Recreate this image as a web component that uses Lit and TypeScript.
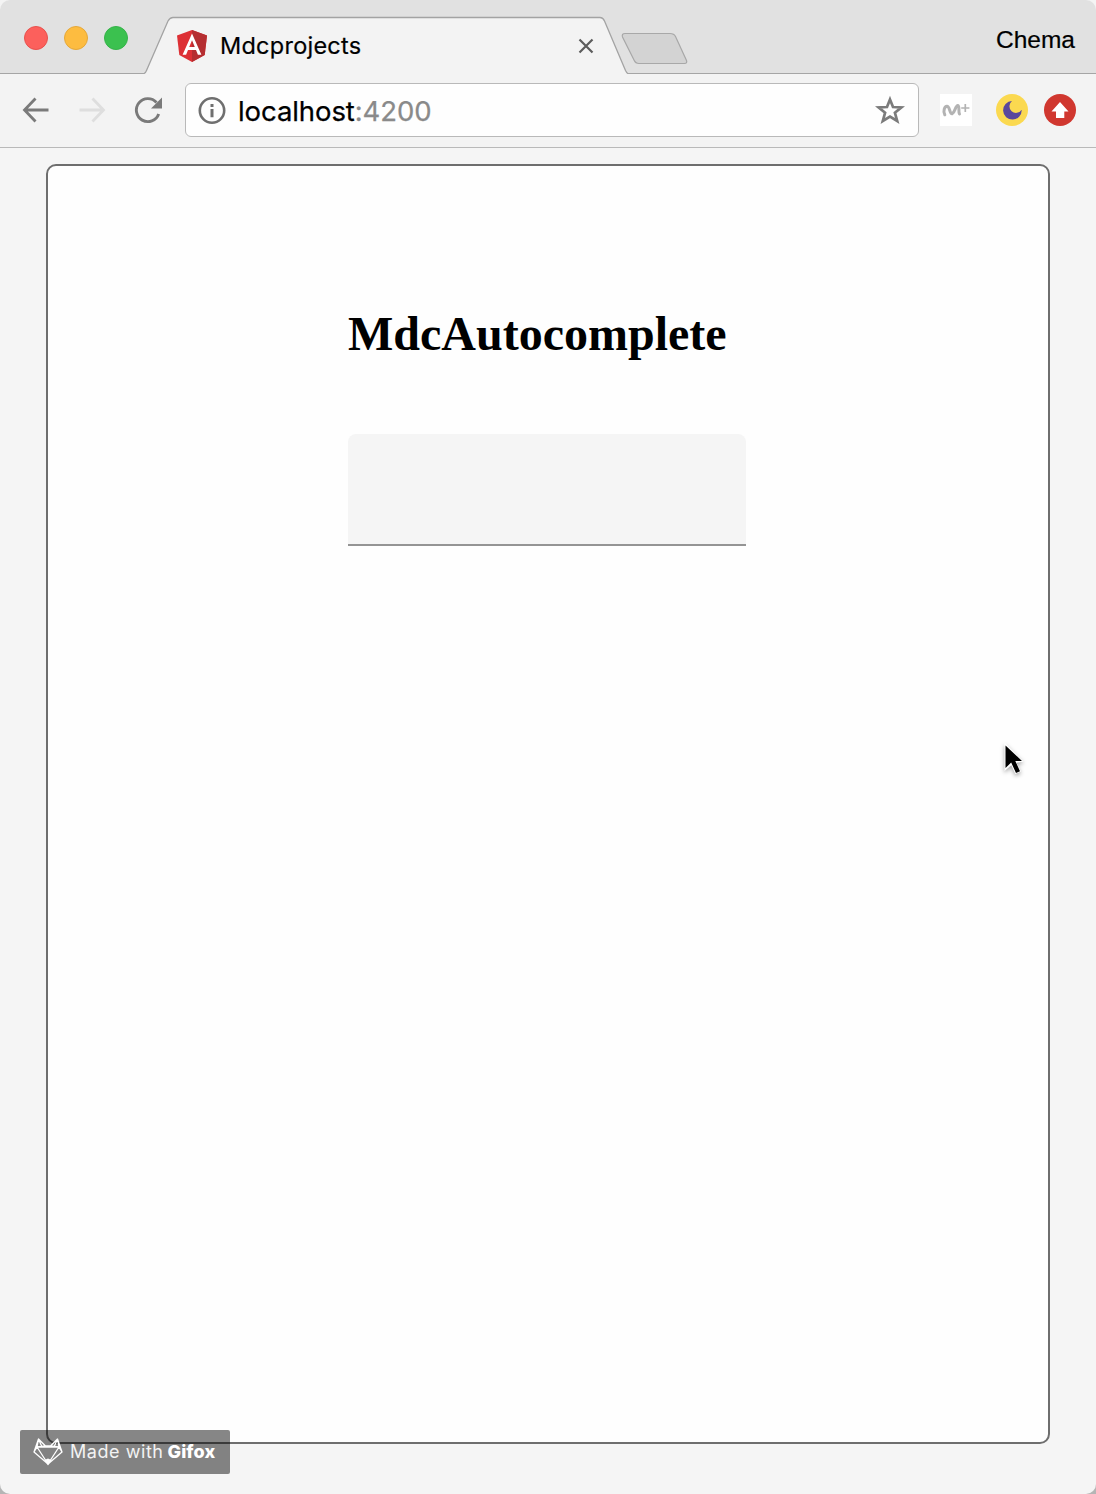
import { LitElement, html, css } from "lit";
import { customElement } from "lit/decorators.js";

@customElement("browser-tabs")
class BrowserTabs extends LitElement {
  static styles = css`
    :host { display: block; }
    .strip { height: 74px; display: flex; position: relative; box-sizing: border-box; background: #e1e1e1; border-bottom: 1px solid #a5a5a5; }
    .lights { display: flex; gap: 16px; padding: 26px 16px 0 24px; width: 144px; box-sizing: border-box; }
    .light { width: 24px; height: 24px; border-radius: 50%; box-sizing: border-box; flex: none; }
    .close { background: #fc605c; border: 1px solid #e8514d; }
    .min { background: #fdbc40; border: 1px solid #e5a83a; }
    .max { background: #3bc14f; border: 1px solid #35b349; }
    .tab { width: 484px; height: 74px; position: relative; flex: none; }
    .shape { position: absolute; left: 0; top: 0; }
    .content { position: relative; display: flex; align-items: center; height: 56px; padding: 18px 34px 0 32px; box-sizing: content-box; }
    .content { height: 56px; }
    .title { font: 23.5px/30px Inter, sans-serif; margin-left: 12px; flex: 1; color: #000; white-space: nowrap; letter-spacing: 0.25px; -webkit-text-stroke: 0.2px #000; }
    .new { margin: 32px 0 0 -7px; flex: none; align-self: flex-start; position: relative; }
    .user { font: 24.5px/30px "Liberation Sans", sans-serif; margin: 25px 21px 0 auto; color: #000; -webkit-text-stroke: 0.2px #000; }
  `;
  render() {
    return html`<div class="strip">
      <div class="lights"><div class="light close"></div><div class="light min"></div><div class="light max"></div></div>
      <div class="tab">
        <svg class="shape" width="484" height="74"><path d="M0 74V73.500Q1.500 73 2.500 70.500L24 21Q26 17.500 29 17.500H456Q459 17.500 460.500 21L481.500 70.500Q483 73.500 484 73.500V74Z" fill="#f3f3f3"/><path d="M0 73.500Q1.500 73 2.500 70.500L24 21Q26 17.500 29 17.500H456Q459 17.500 460.500 21L481.500 70.500Q483 73.500 484 73.500" fill="none" stroke="#a3a3a3" stroke-width="1.300"/></svg>
        <div class="content">
          <svg width="32" height="34" viewBox="0 0 32 34"><path d="M16 1L31 6.500L28.700 26L16 33L3.300 26L1 6.500Z" fill="#dd3035"/><path d="M16 1L31 6.500L28.700 26L16 33Z" fill="#b52e31"/><path fill-rule="evenodd" d="M16 4.500L25.400 25.700H21.900L20 21H12L10.100 25.700H6.600ZM16 11.300L13.200 18H18.800Z" fill="#fff"/></svg>
          <div class="title">Mdcprojects</div>
          <svg width="16" height="16" viewBox="0 0 16 16"><path d="M1.500 1.500L14.500 14.500M14.500 1.500L1.500 14.500" stroke="#5c5c5c" stroke-width="2.200"/></svg>
        </div>
      </div>
      <svg class="new" width="68" height="34" viewBox="0 0 68 34"><path d="M4 1.500H49Q53 1.500 54.500 4.500L65.500 28.500Q66.500 31.500 63.500 31.500H18Q14.500 31.500 13 28L1.500 5Q.5 1.500 4 1.500Z" fill="#d3d3d3" stroke="#a8a8a8" stroke-width="1.200"/></svg>
      <div class="user">Chema</div>
    </div>`;
  }
}

@customElement("browser-toolbar")
class BrowserToolbar extends LitElement {
  static styles = css`
    :host { display: block; }
    .bar { height: 74px; box-sizing: border-box; background: #f3f3f3; border-bottom: 1px solid #b9b9b9; display: flex; align-items: center; padding: 0 20px 1px; }
    .icon { flex: none; margin-right: 24px; }
    .reload { margin-right: 21px; }
    .address { width: 734px; height: 54px; flex: none; box-sizing: border-box; margin: 0 21px 0 0; padding: 0 13px 0 11px; border: 1px solid #b9b9b9; border-radius: 6px; background: #fefefe; display: flex; align-items: center; }
    .url { flex: 1; margin-left: 11px; padding-top: 1px; font: 27.500px/36px Inter, sans-serif; color: #000; white-space: nowrap; letter-spacing: -0.08px; -webkit-text-stroke: 0.25px currentColor; }
    .port { color: #8a8a8a; }
    .ext { display: flex; align-items: center; }
    .ext svg { display: block; }
    .moon { margin: 0 16px 0 24px; }
  `;
  render() {
    return html`<div class="bar">
      <svg class="icon" width="32" height="32" viewBox="0 0 32 32"><path d="M28.500 16H4.500M15.500 4.500L4.500 16L15.500 27.500" fill="none" stroke="#7a7a7a" stroke-width="2.800"/></svg>
      <svg class="icon" width="32" height="32" viewBox="0 0 32 32"><path d="M3.500 16H27.500M16.500 4.500L27.500 16L16.500 27.500" fill="none" stroke="#dedede" stroke-width="2.800"/></svg>
      <svg class="icon reload" width="32" height="32" viewBox="0 0 32 32"><path d="M26.700 20A11.500 11.500 0 1 1 24.500 8.500" fill="none" stroke="#7a7a7a" stroke-width="2.900"/><path d="M30 3.500V14.500H19Z" fill="#7a7a7a"/></svg>
      <div class="address">
        <svg width="30" height="30" viewBox="0 0 30 30"><circle cx="15" cy="15.500" r="12.200" fill="none" stroke="#6f6f6f" stroke-width="2.600"/><path d="M13.500 9h3v3h-3zM13.500 14.100h3v8.200h-3z" fill="#6f6f6f"/></svg>
        <div class="url">localhost<span class="port">:4200</span></div>
        <svg width="30" height="30" viewBox="0 0 30 30"><path d="M15 4.500L18 12L26.500 12.400L19.900 17.700L22.200 26L15 21.500L7.800 26L10.100 17.700L3.500 12.400L12 12Z" fill="none" stroke="#7b7b7b" stroke-width="2.700"/></svg>
      </div>
      <div class="ext">
        <svg width="32" height="32" viewBox="0 0 32 32"><rect width="32" height="32" fill="#fff"/><path d="M4.800 20.800C2.800 17 4.500 12.500 7 12.300C10 12.300 9.500 20.500 12.300 19.700C15 18.500 15.500 11.300 17.800 11.500C20 12 18 17.500 19.500 20" fill="none" stroke="#b3b3b3" stroke-width="3" stroke-linecap="round" stroke-linejoin="round"/><path d="M25.300 10V18M21.200 14H29.400" stroke="#b3b3b3" stroke-width="1.700"/></svg>
        <svg class="moon" width="32" height="32" viewBox="0 0 32 32"><circle cx="16" cy="16" r="16" fill="#fbd950"/><path d="M16 7A9.300 9.300 0 1 0 25.700 15.800A6.650 6.650 0 1 1 16 7Z" fill="#5a479c"/></svg>
        <svg width="32" height="32" viewBox="0 0 32 32"><circle cx="16" cy="16" r="16" fill="#d0372f"/><path d="M16 8L24.500 17.500H20.300V24H12V17.500H7.500Z" fill="#fff"/></svg>
      </div>
    </div>`;
  }
}

@customElement("app-root")
class AppRoot extends LitElement {
  static styles = css`
    :host { display: block; background: linear-gradient(#f4f4f4, #b5b5b5); }
    .window { position: relative; width: 1096px; height: 1494px; overflow: hidden; border-radius: 10px; background: #f5f5f5; display: flex; flex-direction: column; }
    .page { flex: 1; padding: 16px 46px 50px; display: flex; }
    .card { flex: 1; box-sizing: border-box; background: #fefefe; border: 2px solid #6e6e6e; border-radius: 10px; padding: 140px 300px 0; }
    .heading { margin: 0; font: bold 48px/56px "Liberation Serif", serif; color: #000; white-space: nowrap; }
    .field { margin-top: 72px; width: 398px; height: 112px; box-sizing: border-box; background: #f5f5f5; border-bottom: 2px solid #949494; border-radius: 8px 8px 0 0; }
    .cursor { position: absolute; left: 998px; top: 738px; }
    .badge { position: absolute; left: 20px; top: 1430px; width: 210px; height: 44px; box-sizing: border-box; padding-left: 13px; border-radius: 2px; background: rgba(0, 0, 0, 0.47); display: flex; align-items: center; color: #f3f3f3; font: 18px/24px Inter, sans-serif; white-space: nowrap; }
    .made { margin-left: 7px; letter-spacing: 0.55px; }
    .brand { margin-left: 4px; font-weight: 800; color: #fff; letter-spacing: 0.1px; }
  `;
  render() {
    return html`<div class="window">
      <browser-tabs></browser-tabs>
      <browser-toolbar></browser-toolbar>
      <main class="page"><section class="card"><h2 class="heading">MdcAutocomplete</h2><div class="field"></div></section></main>
      <svg class="cursor" width="34" height="42" viewBox="0 0 34 42"><path d="M6.500 4.500L25.500 23.500L18.500 24.700L23 33.500L17.300 36L13.300 27.200L6.500 33Z" fill="#fff" style="filter: drop-shadow(0 2px 2px rgba(0,0,0,.35))"/><path d="M7.500 7.500V30L13.200 24.500L18 35L22 33.200L17.300 23H24Z" fill="#000"/></svg>
      <div class="badge">
        <svg width="30" height="30" viewBox="0 0 30 30"><g fill="none" stroke="#fff" stroke-width="1.300" stroke-linejoin="round"><path d="M5.500 2L1 15L15 27L29 15L24.500 2L17.500 9H12.500ZM5.500 2L4 10L15 27L26 10L24.500 2M4 10H26M12.500 9L4 10L1 15M17.500 9L26 10L29 15M5.500 2L9 10M24.500 2L21 10"/></g><path d="M11.500 23L15 21.500L18.500 23L15 28.500Z" fill="#fff"/></svg>
        <span class="made">Made with</span><span class="brand">Gifox</span>
      </div>
    </div>`;
  }
}
